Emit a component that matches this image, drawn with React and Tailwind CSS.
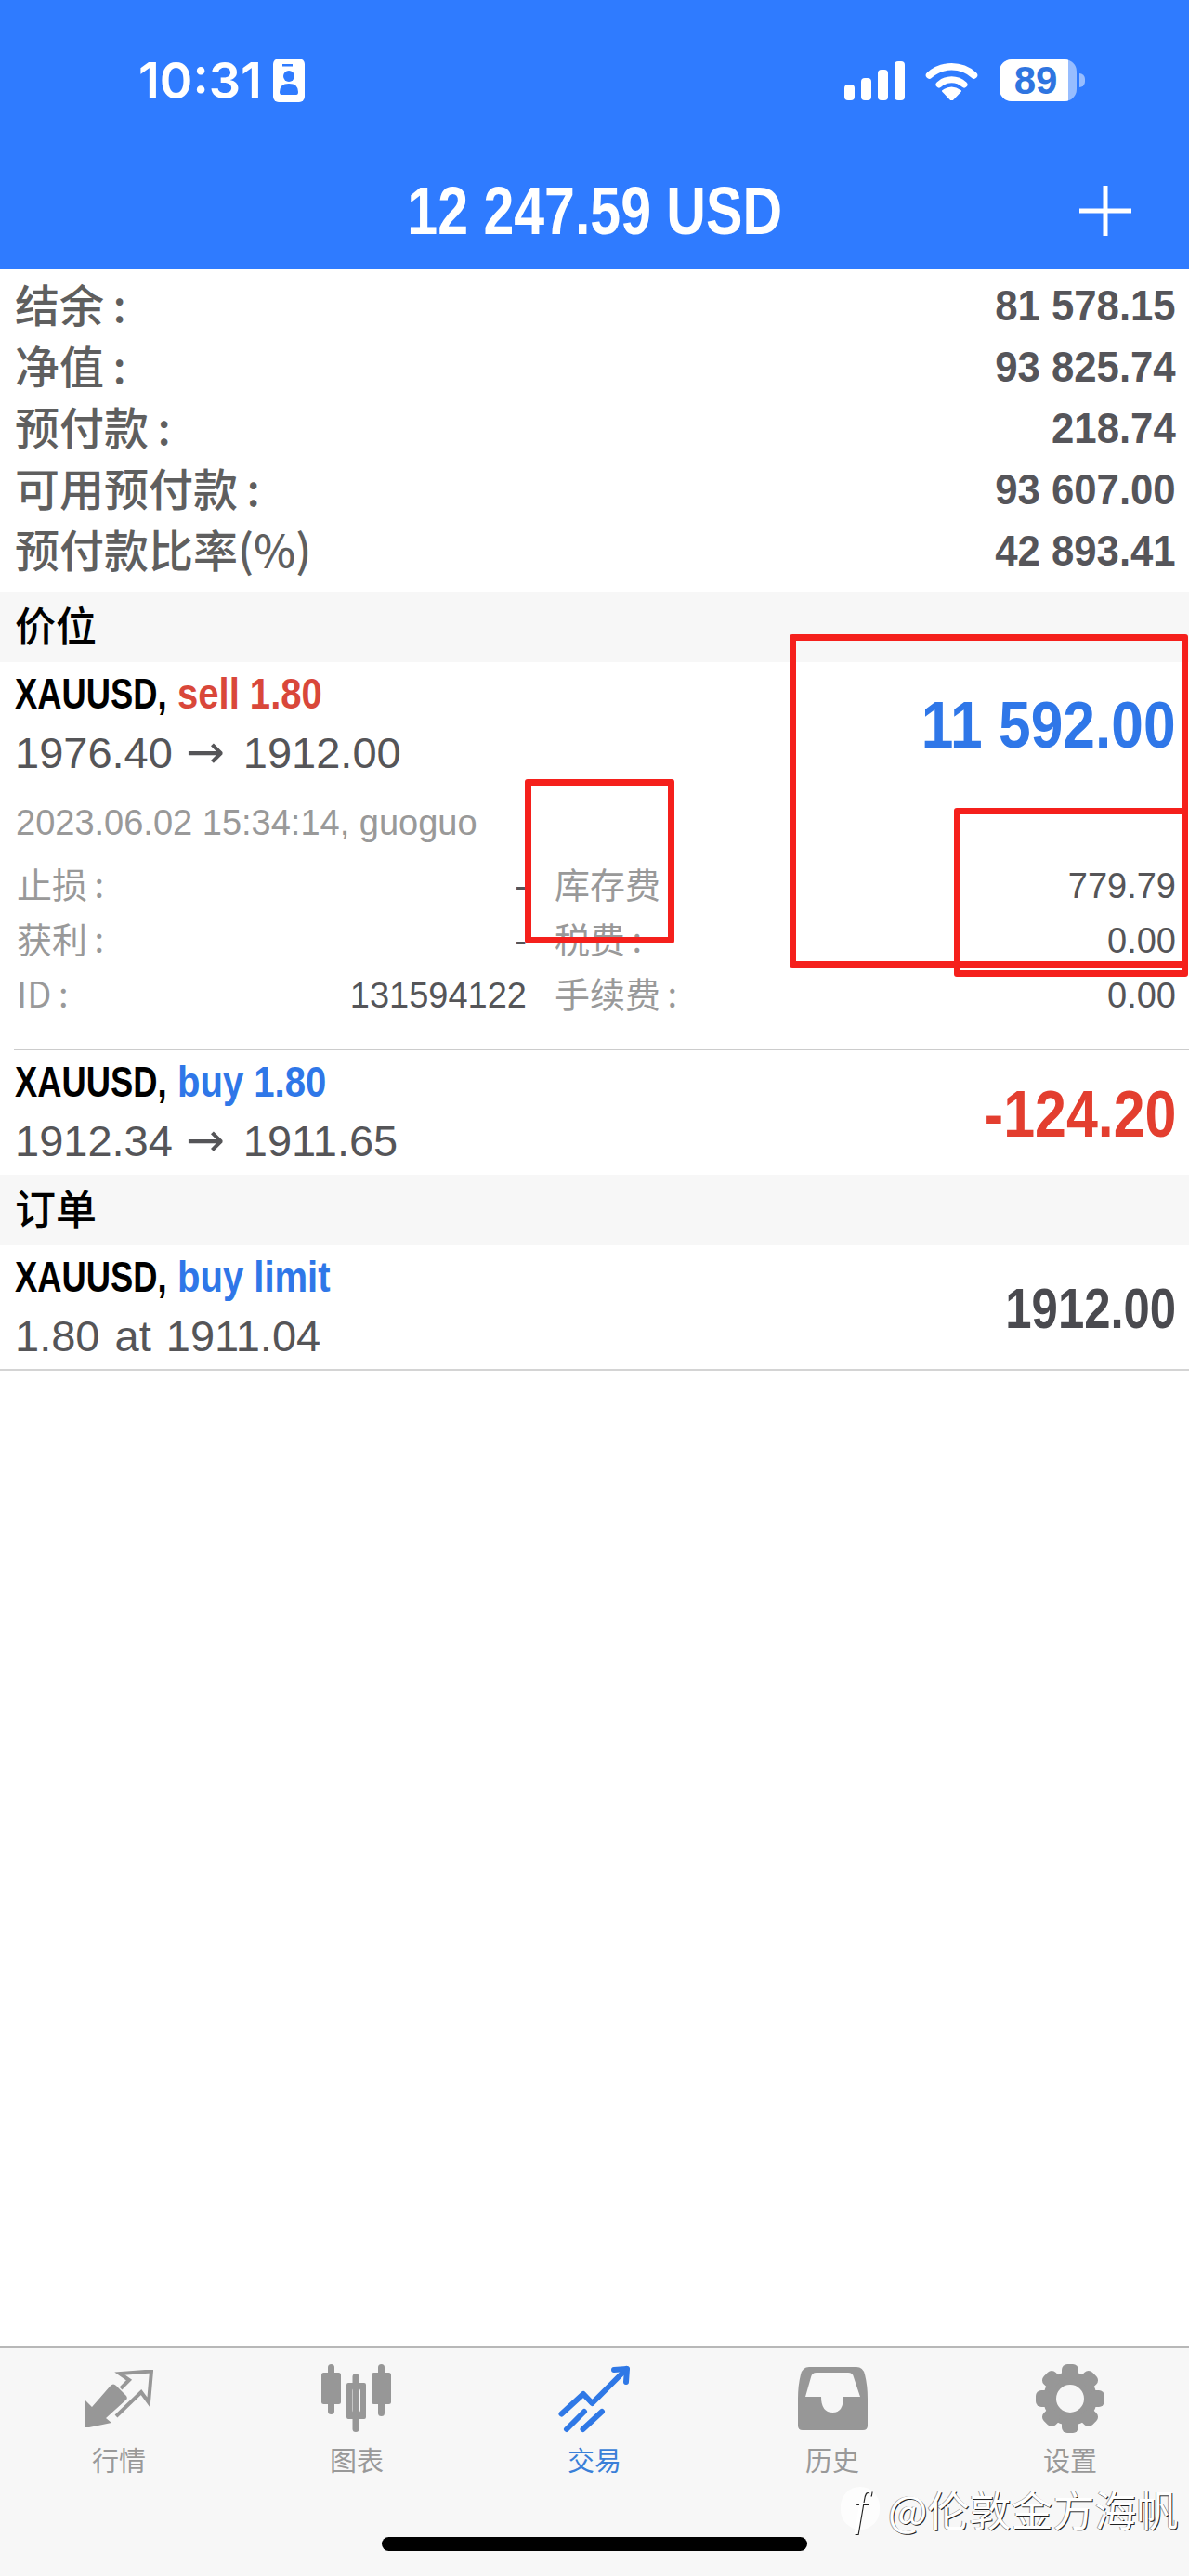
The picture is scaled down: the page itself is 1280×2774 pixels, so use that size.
const cjk = "font-['Noto_Sans_CJK_SC',sans-serif]";

function IdBadge() {
  return (
    <svg viewBox="0 0 34 47" className="w-[34px] h-[47px] ml-[12px]">
      <rect width="34" height="47" rx="6" fill="#fff" />
      <rect x="10" y="6" width="11" height="2.5" fill="#2f7bff" />
      <circle cx="17" cy="19" r="6" fill="#2f7bff" />
      <path d="M7 36 Q7 27 17 27 Q27 27 27 36 Q27 39 25 39 H9 Q7 39 7 36Z" fill="#2f7bff" />
    </svg>
  );
}

function Signal() {
  return (
    <svg viewBox="0 0 65 42" className="w-[65px] h-[42px]" fill="#fff">
      <rect x="0" y="25" width="11" height="17" rx="4" />
      <rect x="18" y="18" width="11" height="24" rx="4" />
      <rect x="36" y="9" width="11" height="33" rx="4" />
      <rect x="54" y="0" width="11" height="42" rx="4" />
    </svg>
  );
}

function Wifi() {
  return (
    <svg viewBox="0 0 57 42" className="w-[57px] h-[42px]" fill="none">
      <path d="M4.5 15 A36 36 0 0 1 52.5 15" stroke="#fff" strokeWidth="7.5" strokeLinecap="round" />
      <path d="M15 25 A20 20 0 0 1 42 25" stroke="#fff" strokeWidth="7" strokeLinecap="round" />
      <path d="M28.5 42 L19 32 Q28.5 25 38 32 Z" fill="#fff" stroke="#fff" strokeLinejoin="round" strokeWidth="2" />
    </svg>
  );
}

function Battery() {
  return (
    <div className="flex items-center">
      <div className="w-[83px] h-[45px] rounded-[13px] bg-white/50 overflow-hidden">
        <div className="w-[74px] h-full bg-white flex items-center justify-center pl-[4px] text-[#2f75e0] text-[42px] font-bold leading-none">
          89
        </div>
      </div>
      <div className="w-[6px] h-[15px] ml-[3px] rounded-r-full bg-white/50" />
    </div>
  );
}

function MarketIcon() {
  return (
    <svg viewBox="0 0 73 62" className="w-[73px] h-[62px]">
      <path d="M0 62 V33 L7 40 L27 17 Q30 14 33 17 L44 28 Q46 31 43 33 L22 52 L28 57 L4 62 Q0 62 0 62Z" fill="#979797" />
      <path d="M38 20 L47 11 L37 4 L71 1.5 L68 35 L60 24 L33 50" fill="none" stroke="#979797" strokeWidth="4" />
    </svg>
  );
}

function ChartIcon() {
  return (
    <svg viewBox="0 0 76 74" className="w-[76px] h-[74px]" fill="#979797">
      <rect x="7" y="0" width="7" height="54" rx="3.5" />
      <rect x="0" y="9" width="21" height="34" rx="2.5" />
      <rect x="33.5" y="10" width="7" height="63" rx="3.5" />
      <path fillRule="evenodd" d="M29 20 H46 Q48 20 48 22 V57 Q48 59 46 59 H29 Q27 59 27 57 V22 Q27 20 29 20Z M36 26 Q33 26 33 29 V49 Q33 52 36 52 H39 Q42 52 42 49 V29 Q42 26 39 26Z" />
      <rect x="61" y="0" width="7" height="56" rx="3.5" />
      <rect x="54" y="9" width="21" height="34" rx="2.5" />
    </svg>
  );
}

function TradeIcon() {
  return (
    <svg viewBox="20 15 80 74" className="w-[80px] h-[74px]" fill="none" stroke="#2f78e6" strokeWidth="6" strokeLinecap="round" strokeLinejoin="round">
      <path d="M24.5 68.5 L48 47 L57.5 57 L94.5 20" />
      <path d="M81 21 L95 20 L94 34" />
      <path d="M30 85 L49 66" />
      <path d="M47.5 85 L68 66" />
    </svg>
  );
}

function HistoryIcon() {
  return (
    <svg viewBox="0 0 75 68" className="w-[75px] h-[68px]" fill="#979797">
      <path
        fillRule="evenodd"
        d="M12 0 H63 Q70 0 72 8 Q75 20 75 34 V63 Q75 68 70 68 H5 Q0 68 0 63 V34 Q0 20 3 8 Q5 0 12 0Z M20 6 Q15 6 14 11 L8 32 H25 Q25 49 37.5 49 Q49 49 49 32 H67 L60 11 Q59 6 54 6Z"
      />
    </svg>
  );
}

function GearIcon() {
  const teeth = [0, 45, 90, 135, 180, 225, 270, 315];
  return (
    <svg viewBox="0 0 76 74" className="w-[76px] h-[74px]" fill="#979797">
      <circle cx="38" cy="37" r="29" />
      {teeth.map((deg) => (
        <rect key={deg} x="29" y="0" width="18" height="16" rx="6" transform={`rotate(${deg} 38 37)`} />
      ))}
      <circle cx="38" cy="37" r="15" fill="#f7f7f7" />
    </svg>
  );
}

function Summary({ label, value }) {
  return (
    <div className="h-[66px] flex items-center justify-between pl-[16px] pr-[14px]">
      <span className={`${cjk} mb-[6px] text-[48px] font-medium leading-none text-[#5f5f5f]`}>{label}</span>
      <span className="inline-block origin-right scale-x-[.95] text-[46px] font-bold leading-none text-[#55555a] whitespace-nowrap">{value}</span>
    </div>
  );
}

function SectionHead({ children }) {
  return (
    <div className={`${cjk} h-[76px] bg-[#f7f7f7] flex items-center pl-[16px] pb-[6px] text-[44px] font-medium leading-none text-black`}>
      {children}
    </div>
  );
}

function Title({ side, color }) {
  return (
    <div className="h-[68px] flex items-center pl-[16px] text-[46px] font-bold leading-none whitespace-nowrap">
      <span className="inline-block w-[175px] text-black">
        <span className="inline-block origin-left scale-x-[.79]">XAUUSD,</span>
      </span>
      <span className={`inline-block origin-left scale-x-[.87] ${color}`}>{side}</span>
    </div>
  );
}

function PriceLine({ from, to }) {
  return (
    <div className="h-[58px] flex items-center pl-[16px] text-[47px] leading-none text-[#555558] whitespace-nowrap [word-spacing:3px]">
      {from}
      {to && <span className="ml-[14px] mr-[20px] font-['DejaVu_Sans',sans-serif] text-[50px] font-normal">→</span>}
      {to}
    </div>
  );
}

function BigValue({ children, color, size, scale }) {
  return <span className={`inline-block origin-right ${scale} ${size} ${color} font-bold leading-none whitespace-nowrap`}>{children}</span>;
}

function Detail({ label, value }) {
  return (
    <div className="h-[59px] flex items-center justify-between">
      <span className={`${cjk} mb-[6px] text-[38px] leading-none text-[#999]`}>{label}</span>
      <span className="text-[38px] leading-none text-[#555558]">{value}</span>
    </div>
  );
}

function Tab({ icon, label, active }) {
  return (
    <div className="flex flex-col items-center">
      <div className="h-[74px] flex items-center justify-center">{icon}</div>
      <span className={`${cjk} mt-[13px] h-[30px] text-[29px] leading-[30px] ${active ? "text-[#3a7fd8]" : "text-[#999]"}`}>{label}</span>
    </div>
  );
}

export default function App() {
  return (
    <div className="relative w-[1280px] h-[2774px] flex flex-col bg-white overflow-hidden font-['Liberation_Sans','Noto_Sans_CJK_SC',sans-serif]">
      {/* HEADER */}
      <header className="h-[290px] bg-[#2f7bff] text-white shrink-0 pt-[63px]">
        <div className="flex items-center justify-between h-[47px] pl-[149px] pr-[112px]">
          <div className="flex items-center">
            <span className="font-['Inter',sans-serif] text-[54px] font-semibold leading-none">10:31</span>
            <IdBadge />
          </div>
          <div className="flex items-center">
            <Signal />
            <div className="ml-[22px] mr-[23px]">
              <Wifi />
            </div>
            <Battery />
          </div>
        </div>
        <div className="grid grid-cols-[1fr_auto_1fr] items-center h-[60px] mt-[81px] px-[62px]">
          <div />
          <span className="inline-block scale-x-[.82] text-[72px] font-bold leading-none whitespace-nowrap">12 247.59 USD</span>
          <svg viewBox="0 0 56 54" className="w-[56px] h-[54px] justify-self-end" stroke="#fff" strokeWidth="5">
            <path d="M0 27 H56 M28 0 V54" />
          </svg>
        </div>
      </header>

      {/* SUMMARY */}
      <section className="pt-[6px] h-[347px] shrink-0">
        <Summary label={"结余\u2009:"} value="81 578.15" />
        <Summary label={"净值\u2009:"} value="93 825.74" />
        <Summary label={"预付款\u2009:"} value="218.74" />
        <Summary label={"可用预付款\u2009:"} value="93 607.00" />
        <Summary label="预付款比率(%)" value="42 893.41" />
      </section>

      <SectionHead>价位</SectionHead>

      {/* OPEN POSITION */}
      <section className="h-[417px] shrink-0">
        <div className="flex justify-between">
          <div>
            <Title side="sell 1.80" color="text-[#d9473a]" />
            <PriceLine from="1976.40" to="1912.00" />
          </div>
          <div className="pr-[14px] pt-[33px]">
            <BigValue color="text-[#2f77e8]" size="text-[70px]" scale="scale-x-[.89]">11 592.00</BigValue>
          </div>
        </div>
        <div className="h-[58px] mt-[18px] flex items-center pl-[17px] text-[38px] leading-none text-[#999]">2023.06.02 15:34:14, guoguo</div>
        <div className="flex gap-[30px] mt-[9px] pl-[18px] pr-[14px]">
          <div className="w-[549px]">
            <Detail label={"止损\u2009:"} value="-" />
            <Detail label={"获利\u2009:"} value="-" />
            <Detail label={"ID\u2009:"} value="131594122" />
          </div>
          <div className="flex-1">
            <Detail label="库存费" value="779.79" />
            <Detail label={"税费\u2009:"} value="0.00" />
            <Detail label={"手续费\u2009:"} value="0.00" />
          </div>
        </div>
      </section>

      <section className="h-[135px] shrink-0">
        <div className="h-px ml-[15px] bg-[#cccccc]" />
        <div className="flex justify-between">
          <div>
            <Title side="buy 1.80" color="text-[#2f77e8]" />
            <PriceLine from="1912.34" to="1911.65" />
          </div>
          <div className="pr-[14px] pt-[34px]">
            <BigValue color="text-[#e33e2f]" size="text-[70px]" scale="scale-x-[.87]">-124.20</BigValue>
          </div>
        </div>
      </section>

      <SectionHead>订单</SectionHead>

      <section className="h-[135px] border-b-2 border-[#d4d4d4] shrink-0">
        <div className="flex justify-between">
          <div>
            <Title side="buy limit" color="text-[#2f77e8]" />
            <PriceLine from="1.80 at 1911.04" />
          </div>
          <div className="pr-[14px] pt-[37px]">
            <BigValue color="text-[#4a4a4f]" size="text-[62px]" scale="scale-x-[.82]">1912.00</BigValue>
          </div>
        </div>
      </section>

      <div className="flex-1" />

      {/* TAB BAR */}
      <nav className="h-[248px] shrink-0 bg-[#f7f7f7] border-t-2 border-[#b8b8b8] pt-[18px]">
        <div className="grid grid-cols-5">
          <Tab icon={<MarketIcon />} label="行情" />
          <Tab icon={<ChartIcon />} label="图表" />
          <Tab icon={<TradeIcon />} label="交易" active />
          <Tab icon={<HistoryIcon />} label="历史" />
          <Tab icon={<GearIcon />} label="设置" />
        </div>
        <div className="w-[458px] h-[15px] mx-auto mt-[69px] rounded-full bg-black" />
      </nav>

      {/* WATERMARK */}
      <div className="absolute left-[905px] top-[2678px] flex items-center">
        <div className="w-[42px] h-[46px] rounded-full bg-white/80 flex items-center justify-center font-['Liberation_Serif',serif] italic text-[50px] leading-none text-white [text-shadow:1px_1px_0_#222]">f</div>
        <span className={`${cjk} ml-[9px] text-[45px] leading-none text-white whitespace-nowrap [text-shadow:1px_1px_0_#222,-1px_0_0_#999]`}>@伦敦金方海帆</span>
      </div>

      {/* RED ANNOTATIONS */}
      <div className="absolute left-[565px] top-[839px] w-[161px] h-[177px] border-[7px] border-[#f5201c] rounded-[3px]" />
      <div className="absolute left-[850px] top-[683px] w-[429px] h-[359px] border-[7px] border-[#f5201c] rounded-[3px]" />
      <div className="absolute left-[1027px] top-[870px] w-[252px] h-[182px] border-[7px] border-[#f5201c] rounded-[3px]" />
    </div>
  );
}
